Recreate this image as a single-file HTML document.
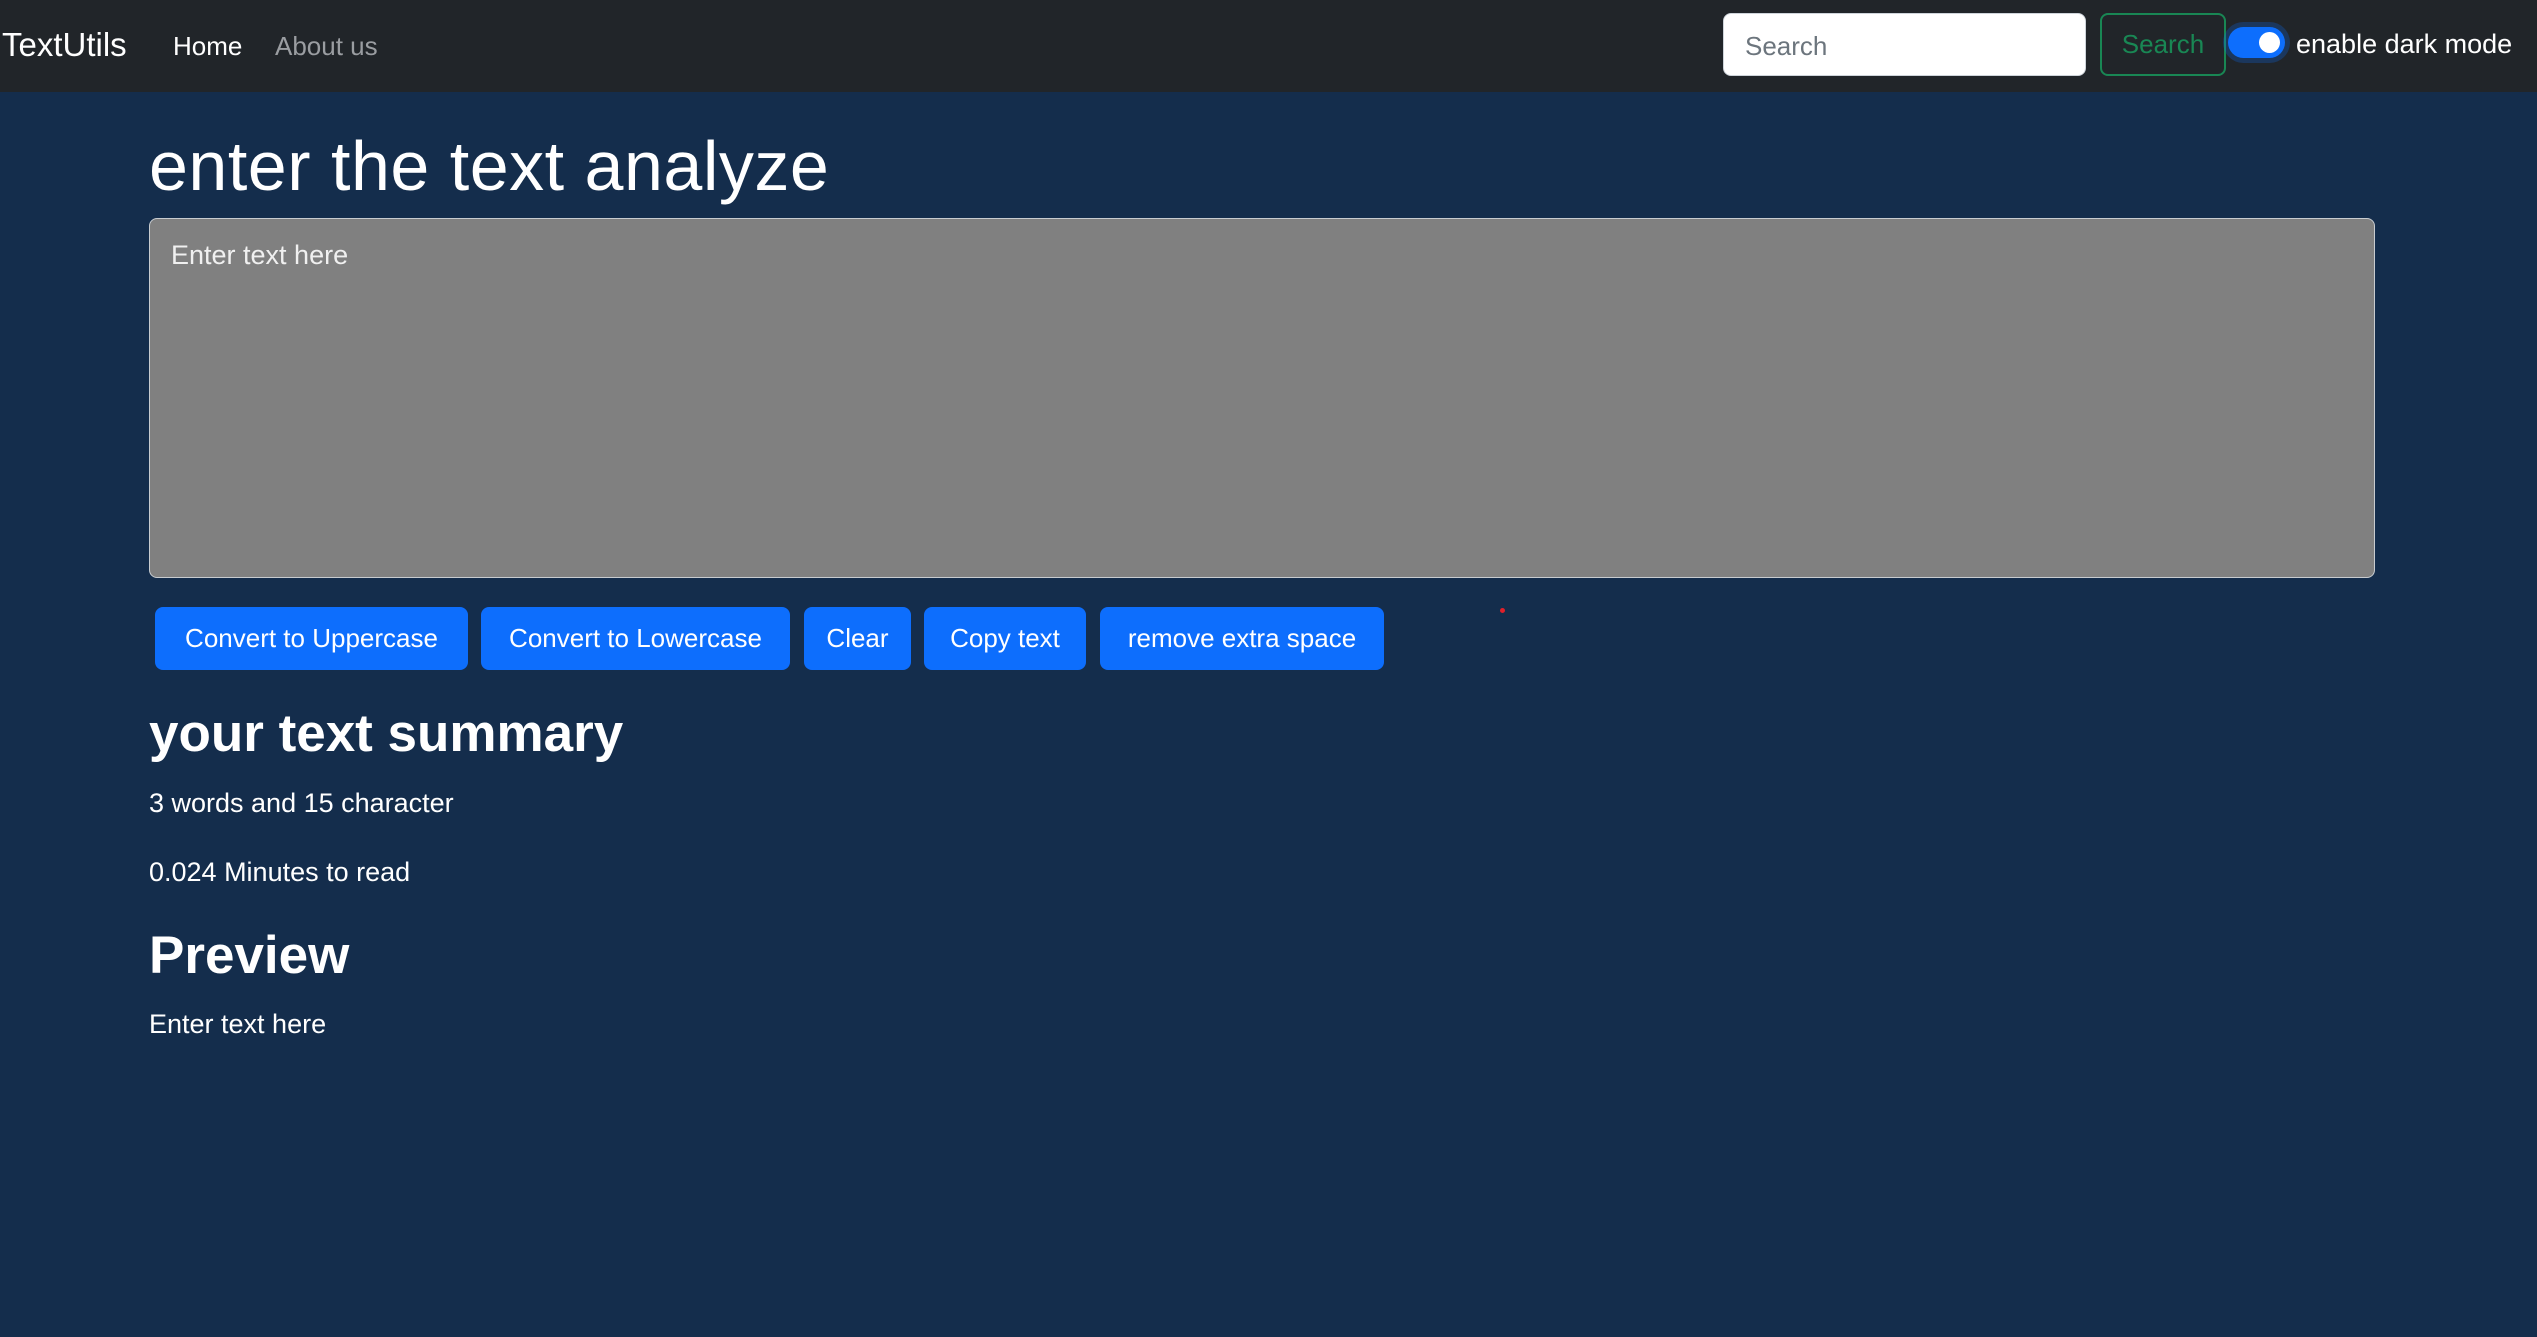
<!DOCTYPE html>
<html><head><meta charset="utf-8"><style>
*{margin:0;padding:0;box-sizing:border-box}
html,body{width:2537px;height:1337px;overflow:hidden;background:#142d4c;font-family:"Liberation Sans",sans-serif;color:#fff}
.a{position:absolute;white-space:nowrap}
nav{position:absolute;left:0;top:0;width:2537px;height:92px;background:#212529}
.btn{position:absolute;top:607px;height:63px;background:#0d6efd;border-radius:8px;font-size:26px;line-height:63px;text-align:center;color:#fff}
</style></head><body>
<nav>
<div class="a" style="left:2px;top:26px;font-size:33px;line-height:38px">TextUtils</div>
<div class="a" style="left:173px;top:30px;font-size:26px;line-height:32px">Home</div>
<div class="a" style="left:275px;top:30px;font-size:26px;line-height:32px;color:#9a9da1">About us</div>
<div class="a" style="left:1723px;top:13px;width:363px;height:63px;background:#fff;border-radius:8px;border:1px solid #ced4da"></div>
<div class="a" style="left:1745px;top:30px;font-size:26px;line-height:32px;color:#6c757d">Search</div>
<div class="a" style="left:2100px;top:13px;width:126px;height:63px;border:2px solid #198754;border-radius:8px;color:#198754;font-size:26px;line-height:59px;text-align:center">Search</div>
<div class="a" style="left:2228px;top:27px;width:57px;height:31px;background:#0d6efd;border-radius:16px;box-shadow:0 0 0 5px rgba(13,110,253,.25)"></div>
<div class="a" style="left:2259px;top:32px;width:21px;height:21px;background:#fff;border-radius:50%"></div>
<div class="a" style="left:2296px;top:28px;font-size:27px;line-height:32px">enable dark mode</div>
</nav>
<div class="a" style="left:149px;top:126px;font-size:70px;line-height:80px;font-weight:500;letter-spacing:0.5px">enter the text analyze</div>
<div class="a" style="left:149px;top:218px;width:2226px;height:360px;background:#808080;border:1px solid #c8ccd0;border-radius:8px"></div>
<div class="a" style="left:171px;top:238px;font-size:27px;line-height:34px;color:#f0f0f0">Enter text here</div>
<div class="btn" style="left:155px;width:313px">Convert to Uppercase</div>
<div class="btn" style="left:481px;width:309px">Convert to Lowercase</div>
<div class="btn" style="left:804px;width:107px">Clear</div>
<div class="btn" style="left:924px;width:162px">Copy text</div>
<div class="btn" style="left:1100px;width:284px">remove extra space</div>
<div class="a" style="left:1500px;top:608px;width:5px;height:5px;background:#e0202a;border-radius:50%"></div>
<div class="a" style="left:149px;top:702px;font-size:53px;line-height:64px;font-weight:bold">your text summary</div>
<div class="a" style="left:149px;top:786px;font-size:27px;line-height:34px">3 words and 15 character</div>
<div class="a" style="left:149px;top:855px;font-size:27px;line-height:34px">0.024 Minutes to read</div>
<div class="a" style="left:149px;top:924px;font-size:53px;line-height:64px;font-weight:bold">Preview</div>
<div class="a" style="left:149px;top:1007px;font-size:27px;line-height:34px">Enter text here</div>
</body></html>
